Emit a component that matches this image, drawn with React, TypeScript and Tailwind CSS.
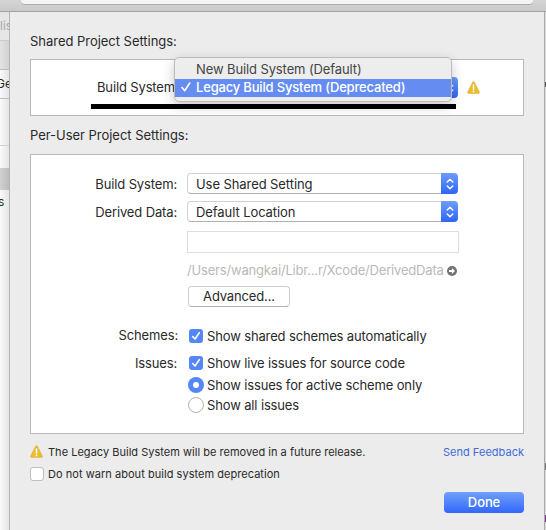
import type { ReactNode } from "react";

function Warning({ className = "" }: { className?: string }) {
  return (
    <svg viewBox="0 0 13 13" className={"h-[13px] w-[13px] shrink-0 " + className}>
      <path d="M5.6 1.2Q6.5 -.1 7.4 1.2L12.4 11Q12.7 12.4 11.4 12.4H1.6Q.3 12.4 .6 11Z" fill="#edbd31" stroke="#d9a92f" strokeWidth=".5" />
      <path d="M6.5 4v4.2" stroke="white" strokeWidth="1.5" strokeLinecap="round" />
      <circle cx="6.5" cy="10.4" r=".9" fill="white" />
    </svg>
  );
}

function Stepper() {
  return (
    <span className="flex h-[21px] w-[17px] shrink-0 items-center justify-center rounded-r-[4px] bg-gradient-to-b from-[#6d9df9] to-[#3064f5]">
      <svg viewBox="0 0 8 12" className="h-3 w-2" fill="none" stroke="white" strokeWidth="1.4" strokeLinecap="round" strokeLinejoin="round">
        <path d="M1.2 3.9L4 1.2L6.8 3.9M1.2 8.1L4 10.8L6.8 8.1" />
      </svg>
    </span>
  );
}

function Select({ children }: { children: ReactNode }) {
  return (
    <div className="flex h-[21px] w-[271px] rounded-[4px] bg-white">
      <div className="flex flex-1 items-center rounded-l-[4px] border border-r-0 border-[#d2d2d2] border-b-[#b0b0b0] pt-px pl-2 tracking-[-0.08px]">{children}</div>
      <Stepper />
    </div>
  );
}

function Row({ label, height, labelClass = "", children }: { label?: string; height: string; labelClass?: string; children: ReactNode }) {
  return (
    <div className={"flex items-center tracking-[-0.14px] " + height}>
      <span className={"mr-[10px] w-[146px] shrink-0 text-right " + labelClass}>{label}</span>
      {children}
    </div>
  );
}

function Check() {
  return (
    <span className="mr-1 ml-[2px] flex h-[14px] w-[14px] items-center justify-center rounded-[3px] bg-[#5586f7]">
      <svg viewBox="0 0 14 14" className="h-[14px] w-[14px]" fill="none" stroke="white" strokeWidth="1.6" strokeLinecap="round" strokeLinejoin="round">
        <path d="M3.7 7.5L6 10L10.3 3.7" />
      </svg>
    </span>
  );
}

export default function App() {
  return (
    <div className="flex h-[530px] w-[546px] flex-col overflow-hidden bg-white font-['Inter',sans-serif] text-[13px] leading-[18px] whitespace-nowrap text-[#292929]">
      <header className="flex h-3 shrink-0 border-b border-[#a3a3a3] bg-gradient-to-b from-[#d5d5d5] to-[#c9c9c9] pr-[13px] pl-[21px]">
        <div className="h-[5px] flex-1 rounded-b-[4px] border-b border-[#ababab] bg-[#f4f4f4]" />
      </header>
      <div className="flex flex-1">
        <aside className="flex w-[10px] shrink-0 flex-col overflow-hidden border-r border-[#b5b5b5] bg-gradient-to-r from-[#fafafa] to-[#e4e4e4] text-[12px]">
          <div className="flex h-[29px] items-center border-b border-[#c8c8c8] bg-[#e6e6e6] text-[#aaa]"><span>lis</span></div>
          <div className="h-[29px] border-b border-[#bcbcbc] bg-gradient-to-r from-[#e3e3e3] to-[#d2d2d2]" />
          <div className="flex h-[29px] items-center border-b border-[#bcbcbc]"><span className="-ml-[4px]">Ge</span></div>
          <div className="h-[47px] border-b border-[#d2d2d2]" />
          <div className="h-[22px]" />
          <div className="h-[22px] bg-gradient-to-r from-[#d1d1d1] to-[#bcbcbc]" />
          <div className="flex h-6 items-center"><span className="-ml-[2px]">s</span></div>
        </aside>
        <main className="flex w-[534px] shrink-0 flex-col bg-[#ececec] px-5">
          <h2 className="mt-5 h-[18px] tracking-[-0.03px]">Shared Project Settings:</h2>
          <section className="relative mt-[9px] h-[57px] shrink-0 border border-[#bababa] bg-white">
            <div className="flex h-[55px] items-center">
              <span className="ml-[66px] w-[90px] pb-px tracking-[-0.14px]">Build System:</span>
              <div className="flex w-[271px] justify-end"><Stepper /></div>
              <Warning className="mb-px ml-[9px]" />
            </div>
            <div className="absolute top-[44px] left-[60px] h-[5px] w-[365px] bg-black" />
            <div className="absolute top-[-3px] left-[143px] h-[45px] w-[278px] overflow-hidden rounded-[5px] border border-[#bcbcbc] bg-[#ededed] pt-[3px] shadow-[0_4px_12px_rgba(0,0,0,0.22)]">
              <div className="flex h-[18px] items-center pb-[2px] pl-[21px] tracking-[-0.11px] text-[#444]">New Build System (Default)</div>
              <div className="flex h-[18px] items-center bg-[#658df1] pb-[2px] font-medium tracking-[-0.18px] text-white">
                <svg viewBox="0 0 10 12" className="mr-[5px] ml-[6px] h-3 w-[10px]" fill="none" stroke="currentColor" strokeWidth="1.6" strokeLinecap="round" strokeLinejoin="round"><path d="M1 6.5L3.7 9.7L8.7 2" /></svg>
                Legacy Build System (Deprecated)
              </div>
            </div>
          </section>
          <h2 className="mt-[10px] h-[18px] tracking-[-0.03px]">Per-User Project Settings:</h2>
          <section className="mt-[10px] h-[280px] shrink-0 border border-[#bababa] bg-white pt-[15px]">
            <Row label="Build System:" height="h-[27px]"><Select>Use Shared Setting</Select></Row>
            <Row label="Derived Data:" height="h-[29px]"><Select>Default Location</Select></Row>
            <Row height="h-[32px]"><div className="h-[22px] w-[272px] border border-[#dedede]" /></Row>
            <Row height="h-[24px]">
              <span className="w-[260px] tracking-[-0.18px] text-[#b9b9b9]">/Users/wangkai/Libr...r/Xcode/DerivedData</span>
              <svg viewBox="0 0 10 10" className="mt-px h-[10px] w-[10px] shrink-0"><circle cx="5" cy="5" r="5" fill="#737373" /><path d="M2 4.1H4.9V2.1L8 5L4.9 7.9V5.9H2Z" fill="white" /></svg>
            </Row>
            <Row height="h-[29px]"><button className="ml-px h-[21px] w-[102px] rounded-[4px] border border-[#cecece] border-b-[#b2b2b2] bg-white leading-[19px] tracking-[-0.14px]">Advanced...</button></Row>
            <div className="h-[11px]" />
            <Row label="Schemes:" height="h-[28px]" labelClass="relative left-px -top-px"><Check />Show shared schemes automatically</Row>
            <Row label="Issues:" height="h-[26px]"><Check />Show live issues for source code</Row>
            <Row height="h-[18px]"><span className="mr-[3px] ml-px flex h-4 w-4 items-center justify-center rounded-full bg-[#5586f7]"><span className="h-[6px] w-[6px] rounded-full bg-white" /></span>Show issues for active scheme only</Row>
            <Row height="h-[22px]"><span className="mr-[3px] ml-px h-4 w-4 rounded-full border border-[#b3b3b3]" />Show all issues</Row>
          </section>
          <div className="mt-[7px] flex h-[22px] items-center text-[11px] tracking-[0.02px]">
            <Warning className="mr-[5px] mb-[2px]" />
            <span>The Legacy Build System will be removed in a future release.</span>
            <a className="ml-auto text-[#426bd8]">Send Feedback</a>
          </div>
          <div className="flex h-[22px] items-center text-[11px] tracking-[0.04px]">
            <span className="mr-[4px] h-[14px] w-[14px] rounded-[3px] border border-[#bfbfbf] bg-white" />
            Do not warn about build system deprecation
          </div>
          <button className="mt-[7px] h-[21px] w-20 self-end rounded-[4px] bg-gradient-to-b from-[#719ff9] to-[#3365fa] leading-[21px] font-medium tracking-[-0.1px] text-white">Done</button>
        </main>
        <aside className="flex w-[2px] shrink-0 flex-col items-end border-l border-[#aaa] bg-[#ddd]">
          <div className="mt-[70px] h-[5px] w-px bg-[#555]" />
          <div className="mt-[376px] h-[7px] w-px bg-[#777]" />
          <div className="mt-[45px] h-[7px] w-px bg-[#853199]" />
        </aside>
      </div>
    </div>
  );
}
